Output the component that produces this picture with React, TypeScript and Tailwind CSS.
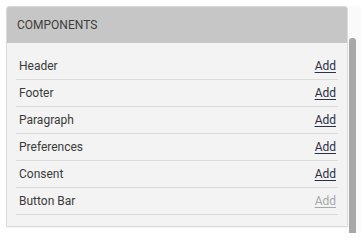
const ITEMS = [
  { name: 'Header', disabled: false },
  { name: 'Footer', disabled: false },
  { name: 'Paragraph', disabled: false },
  { name: 'Preferences', disabled: false },
  { name: 'Consent', disabled: false },
  { name: 'Button Bar', disabled: true },
];

export default function App() {
  return (
    <div className="flex h-[233px] w-[361px] overflow-hidden bg-white pl-[6px] pt-[6px] font-['Roboto',sans-serif]">
      <div className="h-[221px] w-[342px] shrink-0 overflow-hidden rounded-t-[3px] border border-[#dadada] bg-[#f3f3f3] shadow-[0_1px_2px_rgba(0,0,0,0.06)]">
        <div className="flex h-[36px] items-center bg-[#c6c6c6] pl-[10px] text-[12px] text-[#3d3d3d]">
          COMPONENTS
        </div>
        <ul className="px-[9px] pt-[10px]">
          {ITEMS.map((item) => (
            <li
              key={item.name}
              className="flex h-[27px] items-center justify-between border-b border-[#dcdcdc] pl-[3px] pr-[2px] text-[12px]"
            >
              <span className="text-[#3a3a3a]">{item.name}</span>
              <a
                href="#"
                className={
                  item.disabled
                    ? 'text-[#a8a8a8] underline underline-offset-2'
                    : 'text-[#2b3045] underline underline-offset-2'
                }
              >
                Add
              </a>
            </li>
          ))}
        </ul>
      </div>
      <div className="ml-px flex w-[13px] flex-col bg-[#fafafa]">
        <div className="mt-[32px] h-full w-[7px] rounded-t-[3px] bg-[#a8a8a8]" />
      </div>
    </div>
  );
}
